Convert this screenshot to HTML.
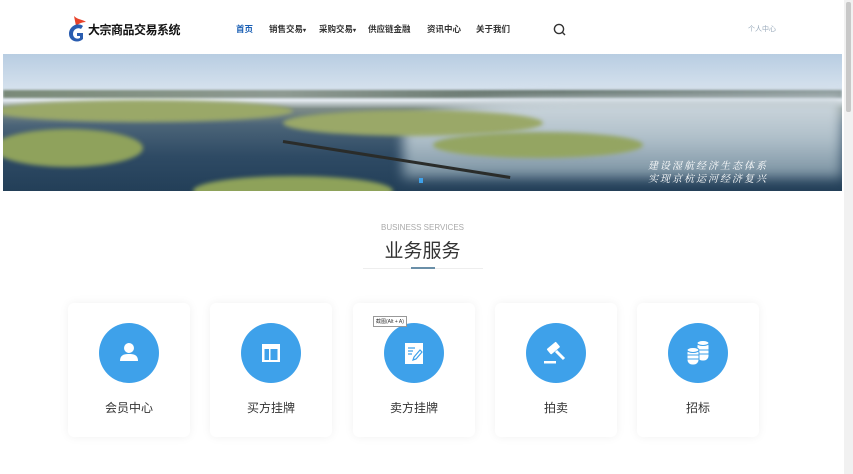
<!DOCTYPE html>
<html><head><meta charset="utf-8"><style>
*{margin:0;padding:0;box-sizing:border-box}
body{width:853px;height:474px;overflow:hidden;background:#fff;font-family:"Liberation Sans","Noto Sans CJK SC",sans-serif;position:relative}
.nav{position:absolute;top:23px;font-size:8.5px;color:#333;font-weight:bold}
.card{position:absolute;top:303px;width:122px;height:134px;background:#fff;border-radius:6px;box-shadow:0 0 10px rgba(0,0,0,0.06)}
.circ{position:absolute;left:31px;top:20px;width:60px;height:60px;border-radius:50%;background:#3ea1ea}
.circ svg{position:absolute;left:15px;top:15px}
.lbl{position:absolute;top:96px;width:100%;text-align:center;font-size:12px;color:#333}
.isl{position:absolute;background:#9aa868;border-radius:50%}
</style></head><body>
<svg style="position:absolute;left:66px;top:14px" width="24" height="30" viewBox="0 0 24 30">
<path d="M8 2 C12 6 16 5 20 8 C16 8 12 10 10 12 Z" fill="#e8422a"/>
<path d="M17 12 C12 8 3 12 3 20 C3 27 12 30 17 25 L17 19 L11 19 L11 22 L14 22 L14 24 C10 26 7 23 7 20 C7 15 12 13 15 15 Z" fill="#2a5db0"/>
</svg>
<div style="position:absolute;left:88px;top:21px;font-size:12px;font-weight:bold;color:#111;letter-spacing:-0.5px">大宗商品交易系统</div>
<div class="nav" style="left:236px;color:#1a5fb4">首页</div>
<div class="nav" style="left:269px">销售交易<span style="font-size:6px">▾</span></div>
<div class="nav" style="left:319px">采购交易<span style="font-size:6px">▾</span></div>
<div class="nav" style="left:368px">供应链金融</div>
<div class="nav" style="left:427px">资讯中心</div>
<div class="nav" style="left:476px">关于我们</div>
<svg style="position:absolute;left:553px;top:23px" width="13" height="13" viewBox="0 0 13 13"><circle cx="6" cy="6" r="4.6" fill="none" stroke="#333" stroke-width="1.4"/><path d="M9.3 9.3 L12 12" stroke="#333" stroke-width="1.4"/></svg>
<div style="position:absolute;left:748px;top:24px;font-size:7px;color:#9ab">个人中心</div>
<div style="position:absolute;right:0;top:0;width:9px;height:474px;background:#f1f1f1"></div>
<div style="position:absolute;right:2px;top:2px;width:5px;height:110px;background:#c8c8c8;border-radius:2px"></div>
<div style="position:absolute;left:3px;top:54px;width:839px;height:137px;overflow:hidden;background:linear-gradient(#b8cde2 0%,#d8e3ee 28%,#e2e8ee 34%,#7e8c88 40%,#4b6478 52%,#2e4a64 75%,#233f58 100%)">
<div style="position:absolute;left:0;top:36px;width:839px;height:8px;background:linear-gradient(90deg,#7a8a78,#8e9a92,#5e6e66,#8a9898);filter:blur(1px)"></div>
<div style="position:absolute;left:400px;top:44px;width:439px;height:80px;background:linear-gradient(180deg,#d0d9df,#b0c0ca 50%,#7890a0);filter:blur(6px);border-radius:40% 0 0 0"></div>
<div class="isl" style="left:-10px;top:46px;width:300px;height:22px;filter:blur(2px)"></div>
<div class="isl" style="left:280px;top:56px;width:260px;height:26px;filter:blur(2px)"></div>
<div class="isl" style="left:430px;top:78px;width:210px;height:26px;filter:blur(2px);background:#94a562"></div>
<div class="isl" style="left:-10px;top:75px;width:150px;height:38px;filter:blur(2px);background:#8fa25c"></div>
<div class="isl" style="left:190px;top:122px;width:200px;height:30px;filter:blur(2px);background:#8ea25a"></div>
<div style="position:absolute;left:280px;top:86px;width:230px;height:3px;background:#2a2c2a;transform:rotate(9deg);transform-origin:left"></div>
<div style="position:absolute;left:645px;top:104px;font-size:10px;color:#fff;font-style:italic;line-height:13px;letter-spacing:2px;font-family:'Noto Serif CJK SC',serif">建设湿航经济生态体系<br>实现京杭运河经济复兴</div>
<div style="position:absolute;left:416px;top:124px;width:4px;height:5px;background:#3ea1ea"></div>
</div>
<div style="position:absolute;left:0;width:845px;top:223px;text-align:center;font-size:8px;color:#aaa">BUSINESS SERVICES</div>
<div style="position:absolute;left:0;width:845px;top:236px;text-align:center;font-size:19px;color:#333">业务服务</div>
<div style="position:absolute;left:363px;top:268px;width:120px;height:1px;background:#eee"></div>
<div style="position:absolute;left:411px;top:267px;width:24px;height:2px;background:#6a8fa8"></div>
<div class="card" style="left:68px"><div class="circ"><svg width="30" height="30" viewBox="0 0 30 30"><circle cx="15" cy="10" r="5" fill="#fff"/><path d="M6 23 C6 17 10 16 15 16 C20 16 24 17 24 23 Z" fill="#fff"/></svg></div><div class="lbl">会员中心</div></div>
<div class="card" style="left:210px"><div class="circ"><svg width="30" height="30" viewBox="0 0 30 30"><rect x="6" y="6" width="18" height="18" fill="#fff"/><rect x="8.5" y="11" width="4.5" height="11" fill="#3ea1ea"/><rect x="14.5" y="11" width="7" height="11" fill="#3ea1ea"/></svg></div><div class="lbl">买方挂牌</div></div>
<div class="card" style="left:353px"><div class="circ"><svg width="30" height="30" viewBox="0 0 30 30"><rect x="6" y="5" width="18" height="21" fill="#fff"/><path d="M9 10h7M9 13h5M9 16h4" stroke="#3ea1ea" stroke-width="1.2"/><path d="M14 22 L15 19 L21 12 L23 14 L17 21 Z" fill="none" stroke="#3ea1ea" stroke-width="1.2"/></svg></div><div class="lbl">卖方挂牌</div></div>
<div class="card" style="left:495px"><div class="circ"><svg width="30" height="30" viewBox="0 0 30 30"><g transform="rotate(-40 14 12)"><rect x="8" y="6" width="12" height="7" rx="1" fill="#fff"/></g><path d="M15 13 L23 21" stroke="#fff" stroke-width="3"/><rect x="3" y="23" width="12" height="2.5" fill="#fff"/></svg></div><div class="lbl">拍卖</div></div>
<div class="card" style="left:637px"><div class="circ"><svg width="30" height="30" viewBox="0 0 30 30"><g fill="#fff" stroke="#3ea1ea" stroke-width="1"><rect x="14" y="3" width="12" height="20" rx="5"/><ellipse cx="20" cy="5" rx="6" ry="2.5"/><rect x="4" y="10" width="12" height="17" rx="5"/><ellipse cx="10" cy="12" rx="6" ry="2.5"/></g><path d="M4 17h12M4 21h12M16 12h10M16 16h10" stroke="#3ea1ea" stroke-width="1"/></svg></div><div class="lbl">招标</div></div>
<div style="position:absolute;left:373px;top:316px;font-size:5px;border:1px solid #999;background:#fff;padding:1px 2px;color:#333">截图(Alt + A)</div>
</body></html>
